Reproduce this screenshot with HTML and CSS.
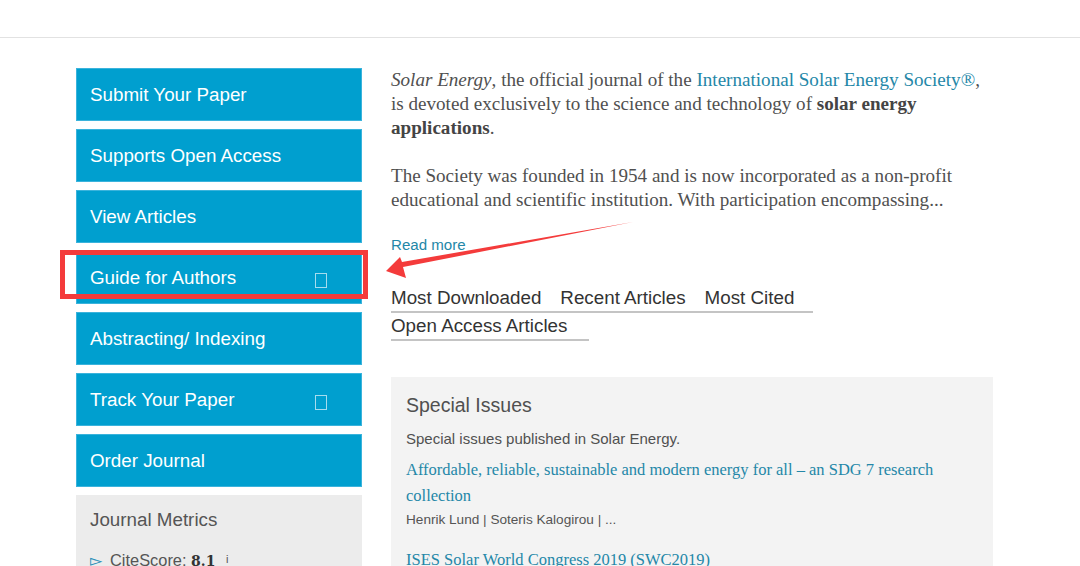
FILE: index.html
```html
<!DOCTYPE html>
<html>
<head>
<meta charset="utf-8">
<link rel="stylesheet" href="styles.css">
</head>
<body>
<div class="topbar"></div>
<div class="page">
  <aside class="sidebar">
    <a class="navbtn">Submit Your Paper</a>
    <a class="navbtn">Supports Open Access</a>
    <a class="navbtn">View Articles</a>
    <a class="navbtn">Guide for Authors<span class="ext"></span></a>
    <a class="navbtn">Abstracting/ Indexing</a>
    <a class="navbtn">Track Your Paper<span class="ext"></span></a>
    <a class="navbtn">Order Journal</a>
    <div class="metrics">
      <div class="metrics-title">Journal Metrics</div>
      <div class="metric"><span class="tri">&#x25BB;</span>CiteScore: <b class="num">8.1</b> <span class="info">i</span></div>
    </div>
  </aside>
  <main class="main">
    <p class="intro"><i>Solar Energy</i>, the official journal of the <a class="link">International Solar Energy Society®</a>, is devoted exclusively to the science and technology of <b>solar energy applications</b>.</p>
    <p class="intro">The Society was founded in 1954 and is now incorporated as a non-profit educational and scientific institution. With participation encompassing...</p>
    <a class="readmore">Read more</a>
    <div class="tabs">
      <span class="tab">Most Downloaded</span><span class="tab">Recent Articles</span><span class="tab">Most Cited</span><br><span class="tab last">Open Access Articles</span>
    </div>
    <section class="special">
      <h2 class="special-title">Special Issues</h2>
      <p class="special-desc">Special issues published in Solar Energy.</p>
      <a class="si-link">Affordable, reliable, sustainable and modern energy for all – an SDG 7 research collection</a>
      <div class="si-authors">Henrik Lund | Soteris Kalogirou | ...</div>
      <a class="si-link second">ISES Solar World Congress 2019 (SWC2019)</a>
    </section>
  </main>
</div>
<div class="highlight"></div>
<svg class="arrow" width="1080" height="566" viewBox="0 0 1080 566">
  <polygon points="386,271 400,257 402,262 633,222 403,267 406,278" fill="#f43b3b"/>
</svg>
</body>
</html>
```
FILE: styles.css
```css
html, body {
  margin: 0;
  padding: 0;
  background: #fff;
  overflow: hidden;
}
body {
  font-family: "Liberation Sans", Arial, sans-serif;
  color: #505050;
  width: 1080px;
  height: 566px;
  position: relative;
}
.topbar {
  height: 37px;
  border-bottom: 1px solid #e2e2e2;
}
.page {
  display: flex;
  gap: 29px;
  padding: 30px 0 0 76px;
}
.sidebar {
  width: 286px;
  flex: none;
  display: flex;
  flex-direction: column;
  gap: 8px;
}
.navbtn {
  display: flex;
  align-items: center;
  justify-content: space-between;
  height: 53px;
  box-sizing: border-box;
  padding: 0 34px 0 13px;
  background: #009fcf;
  border: 1px solid #3ab3dc;
  color: #fff;
  font-size: 18.8px;
  line-height: 22px;
}
.ext {
  width: 10px;
  height: 13px;
  border: 1px solid #a6dcee;
  margin-top: 6px;
}
.metrics {
  background: #ececec;
  padding: 14px 14px 10px;
  height: 120px;
}
.metrics-title {
  font-size: 18.8px;
  line-height: 22px;
  color: #555;
}
.metric {
  margin-top: 18px;
  font-size: 16.4px;
  line-height: 20px;
  color: #555;
}
.tri {
  color: #2a8fb8;
  font-size: 16px;
  margin-right: 8px;
}
.num {
  font-family: "DejaVu Serif", serif;
  font-size: 14px;
  color: #333;
}
.info {
  font-size: 11px;
  margin-left: 6px;
  vertical-align: 3px;
}
.main {
  width: 602px;
  flex: none;
}
.intro {
  margin: 0 0 24px;
  font-family: "Liberation Serif", "Times New Roman", serif;
  font-size: 19.1px;
  line-height: 24px;
  color: #505050;
}
.intro b {
  color: #444;
}
.link {
  color: #2487a8;
}
.readmore {
  display: block;
  margin-top: -1px;
  font-size: 15.1px;
  line-height: 20px;
  color: #2487a8;
}
.tabs {
  margin-top: 31px;
  font-size: 18.8px;
  line-height: 24px;
  color: #333;
}
.tab {
  display: inline-block;
  padding: 0 19px 1px 0;
  border-bottom: 2px solid #c4c4c4;
}
.tab.last {
  margin-top: 1px;
  padding-right: 22px;
}
.special {
  margin-top: 36px;
  background: #f3f3f3;
  padding: 17px 15px 20px;
  height: 200px;
}
.special-title {
  margin: 0;
  font-weight: normal;
  font-size: 19.5px;
  line-height: 22px;
  color: #505050;
}
.special-desc {
  margin: 13px 0 0;
  font-size: 15px;
  line-height: 20px;
  color: #505050;
}
.si-link {
  display: block;
  margin-top: 8px;
  font-family: "Liberation Serif", "Times New Roman", serif;
  font-size: 16.5px;
  line-height: 26px;
  color: #2487a8;
}
.si-authors {
  margin-top: 2px;
  font-size: 13.6px;
  line-height: 18px;
  color: #555;
}
.si-link.second {
  margin-top: 18px;
}
.highlight {
  position: absolute;
  left: 60px;
  top: 250px;
  width: 298px;
  height: 39px;
  border: 5px solid #f43b3b;
}
.arrow {
  position: absolute;
  left: 0;
  top: 0;
  pointer-events: none;
}
```
